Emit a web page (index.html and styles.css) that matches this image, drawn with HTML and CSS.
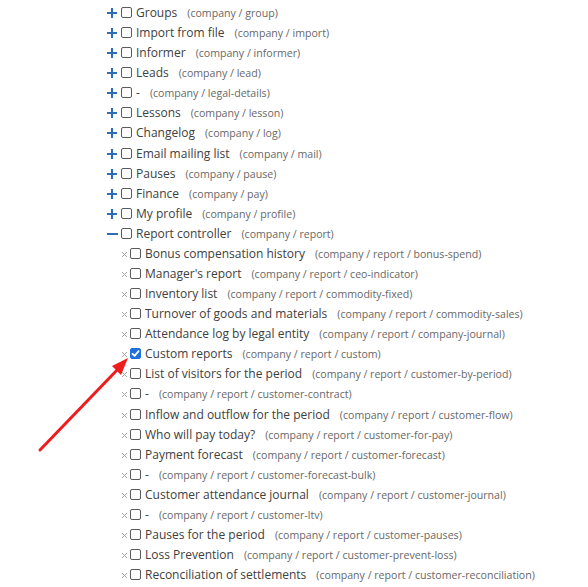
FILE: index.html
```html
<!DOCTYPE html>
<html>
<head>
<meta charset="utf-8">
<link rel="stylesheet" href="styles.css">
</head>
<body>
<div class="tree">
  <div class="row"><span class="tg"><svg class="plus" width="10" height="10" viewBox="0 0 10 10"><path d="M0 5H10M5 0V10"/></svg></span><span class="cb"></span><span class="txt">Groups<span class="path">(company / group)</span></span></div>
  <div class="row"><span class="tg"><svg class="plus" width="10" height="10" viewBox="0 0 10 10"><path d="M0 5H10M5 0V10"/></svg></span><span class="cb"></span><span class="txt">Import from file<span class="path">(company / import)</span></span></div>
  <div class="row"><span class="tg"><svg class="plus" width="10" height="10" viewBox="0 0 10 10"><path d="M0 5H10M5 0V10"/></svg></span><span class="cb"></span><span class="txt">Informer<span class="path">(company / informer)</span></span></div>
  <div class="row"><span class="tg"><svg class="plus" width="10" height="10" viewBox="0 0 10 10"><path d="M0 5H10M5 0V10"/></svg></span><span class="cb"></span><span class="txt">Leads<span class="path">(company / lead)</span></span></div>
  <div class="row"><span class="tg"><svg class="plus" width="10" height="10" viewBox="0 0 10 10"><path d="M0 5H10M5 0V10"/></svg></span><span class="cb"></span><span class="txt">-<span class="path">(company / legal-details)</span></span></div>
  <div class="row"><span class="tg"><svg class="plus" width="10" height="10" viewBox="0 0 10 10"><path d="M0 5H10M5 0V10"/></svg></span><span class="cb"></span><span class="txt">Lessons<span class="path">(company / lesson)</span></span></div>
  <div class="row"><span class="tg"><svg class="plus" width="10" height="10" viewBox="0 0 10 10"><path d="M0 5H10M5 0V10"/></svg></span><span class="cb"></span><span class="txt">Changelog<span class="path">(company / log)</span></span></div>
  <div class="row"><span class="tg"><svg class="plus" width="10" height="10" viewBox="0 0 10 10"><path d="M0 5H10M5 0V10"/></svg></span><span class="cb"></span><span class="txt">Email mailing list<span class="path">(company / mail)</span></span></div>
  <div class="row"><span class="tg"><svg class="plus" width="10" height="10" viewBox="0 0 10 10"><path d="M0 5H10M5 0V10"/></svg></span><span class="cb"></span><span class="txt">Pauses<span class="path">(company / pause)</span></span></div>
  <div class="row"><span class="tg"><svg class="plus" width="10" height="10" viewBox="0 0 10 10"><path d="M0 5H10M5 0V10"/></svg></span><span class="cb"></span><span class="txt">Finance<span class="path">(company / pay)</span></span></div>
  <div class="row"><span class="tg"><svg class="plus" width="10" height="10" viewBox="0 0 10 10"><path d="M0 5H10M5 0V10"/></svg></span><span class="cb"></span><span class="txt">My profile<span class="path">(company / profile)</span></span></div>
  <div class="row"><span class="tg"><svg class="minus" width="11" height="10" viewBox="0 0 11 10"><path d="M0 5H11"/></svg></span><span class="cb"></span><span class="txt">Report controller<span class="path">(company / report)</span></span></div>
  <div class="children">
    <div class="row"><span class="tg x"><svg width="5" height="5" viewBox="0 0 5 5"><path d="M0 0L5 5M5 0L0 5"/></svg></span><span class="cb"></span><span class="txt">Bonus compensation history<span class="path">(company / report / bonus-spend)</span></span></div>
    <div class="row"><span class="tg x"><svg width="5" height="5" viewBox="0 0 5 5"><path d="M0 0L5 5M5 0L0 5"/></svg></span><span class="cb"></span><span class="txt">Manager's report<span class="path">(company / report / ceo-indicator)</span></span></div>
    <div class="row"><span class="tg x"><svg width="5" height="5" viewBox="0 0 5 5"><path d="M0 0L5 5M5 0L0 5"/></svg></span><span class="cb"></span><span class="txt">Inventory list<span class="path">(company / report / commodity-fixed)</span></span></div>
    <div class="row"><span class="tg x"><svg width="5" height="5" viewBox="0 0 5 5"><path d="M0 0L5 5M5 0L0 5"/></svg></span><span class="cb"></span><span class="txt">Turnover of goods and materials<span class="path">(company / report / commodity-sales)</span></span></div>
    <div class="row"><span class="tg x"><svg width="5" height="5" viewBox="0 0 5 5"><path d="M0 0L5 5M5 0L0 5"/></svg></span><span class="cb"></span><span class="txt">Attendance log by legal entity<span class="path">(company / report / company-journal)</span></span></div>
    <div class="row"><span class="tg x"><svg width="5" height="5" viewBox="0 0 5 5"><path d="M0 0L5 5M5 0L0 5"/></svg></span><span class="cb checked"><svg width="9" height="9" viewBox="0 0 9 9"><path d="M1.5 4.8L3.6 6.8L7.6 2.2"/></svg></span><span class="txt">Custom reports<span class="path">(company / report / custom)</span></span></div>
    <div class="row"><span class="tg x"><svg width="5" height="5" viewBox="0 0 5 5"><path d="M0 0L5 5M5 0L0 5"/></svg></span><span class="cb"></span><span class="txt">List of visitors for the period<span class="path">(company / report / customer-by-period)</span></span></div>
    <div class="row"><span class="tg x"><svg width="5" height="5" viewBox="0 0 5 5"><path d="M0 0L5 5M5 0L0 5"/></svg></span><span class="cb"></span><span class="txt">-<span class="path">(company / report / customer-contract)</span></span></div>
    <div class="row"><span class="tg x"><svg width="5" height="5" viewBox="0 0 5 5"><path d="M0 0L5 5M5 0L0 5"/></svg></span><span class="cb"></span><span class="txt">Inflow and outflow for the period<span class="path">(company / report / customer-flow)</span></span></div>
    <div class="row"><span class="tg x"><svg width="5" height="5" viewBox="0 0 5 5"><path d="M0 0L5 5M5 0L0 5"/></svg></span><span class="cb"></span><span class="txt">Who will pay today?<span class="path">(company / report / customer-for-pay)</span></span></div>
    <div class="row"><span class="tg x"><svg width="5" height="5" viewBox="0 0 5 5"><path d="M0 0L5 5M5 0L0 5"/></svg></span><span class="cb"></span><span class="txt">Payment forecast<span class="path">(company / report / customer-forecast)</span></span></div>
    <div class="row"><span class="tg x"><svg width="5" height="5" viewBox="0 0 5 5"><path d="M0 0L5 5M5 0L0 5"/></svg></span><span class="cb"></span><span class="txt">-<span class="path">(company / report / customer-forecast-bulk)</span></span></div>
    <div class="row"><span class="tg x"><svg width="5" height="5" viewBox="0 0 5 5"><path d="M0 0L5 5M5 0L0 5"/></svg></span><span class="cb"></span><span class="txt">Customer attendance journal<span class="path">(company / report / customer-journal)</span></span></div>
    <div class="row"><span class="tg x"><svg width="5" height="5" viewBox="0 0 5 5"><path d="M0 0L5 5M5 0L0 5"/></svg></span><span class="cb"></span><span class="txt">-<span class="path">(company / report / customer-ltv)</span></span></div>
    <div class="row"><span class="tg x"><svg width="5" height="5" viewBox="0 0 5 5"><path d="M0 0L5 5M5 0L0 5"/></svg></span><span class="cb"></span><span class="txt">Pauses for the period<span class="path">(company / report / customer-pauses)</span></span></div>
    <div class="row"><span class="tg x"><svg width="5" height="5" viewBox="0 0 5 5"><path d="M0 0L5 5M5 0L0 5"/></svg></span><span class="cb"></span><span class="txt">Loss Prevention<span class="path">(company / report / customer-prevent-loss)</span></span></div>
    <div class="row"><span class="tg x"><svg width="5" height="5" viewBox="0 0 5 5"><path d="M0 0L5 5M5 0L0 5"/></svg></span><span class="cb"></span><span class="txt">Reconciliation of settlements<span class="path">(company / report / customer-reconciliation)</span></span></div>
  </div>
</div>
<svg class="arrow" width="588" height="587" viewBox="0 0 588 587">
  <line x1="40" y1="450" x2="119" y2="368" stroke="#ee1c1c" stroke-width="3" stroke-linecap="round"/>
  <polygon points="128,358 112,366 121,375" fill="#ee1c1c"/>
</svg>
</body>
</html>
```
FILE: styles.css
```css
html, body {
  margin: 0;
  padding: 0;
  background: #ffffff;
}
body {
  position: relative;
  width: 588px;
  height: 587px;
  overflow: hidden;
  font-family: "Open Sans", "Liberation Sans", sans-serif;
}
.tree {
  padding: 3px 0 0 107px;
}
.children {
  padding-left: 9px;
}
.row {
  display: flex;
  align-items: flex-start;
  height: 20.08px;
  white-space: nowrap;
}
.tg {
  width: 12px;
  height: 20px;
  flex: none;
  margin-right: 2px;
  display: flex;
  align-items: flex-start;
}
.tg svg {
  margin-top: 5px;
  display: block;
}
.plus path, .minus path {
  stroke: #2d6db3;
  stroke-width: 2;
  fill: none;
}
.tg.x {
  justify-content: flex-end;
  padding-right: 1px;
  width: 11px;
}
.tg.x svg {
  margin-top: 8px;
}
.tg.x path {
  stroke: #a6a6a6;
  stroke-width: 1;
  fill: none;
}
.cb {
  width: 9px;
  height: 9px;
  border: 1px solid #5a5a5a;
  border-radius: 2px;
  margin-top: 4px;
  margin-right: 4px;
  flex: none;
  background: #fff;
}
.cb.checked {
  background: #1f6fdc;
  border-color: #1f6fdc;
  display: flex;
  align-items: center;
  justify-content: center;
}
.cb.checked svg {
  display: block;
}
.cb.checked path {
  stroke: #fff;
  stroke-width: 1.8;
  fill: none;
  stroke-linecap: round;
  stroke-linejoin: round;
}
.txt {
  font-size: 12px;
  line-height: 20px;
  color: #404040;
}
.path {
  font-size: 10.6px;
  color: #686868;
  margin-left: 10px;
}
.arrow {
  position: absolute;
  left: 0;
  top: 0;
  pointer-events: none;
}
```
